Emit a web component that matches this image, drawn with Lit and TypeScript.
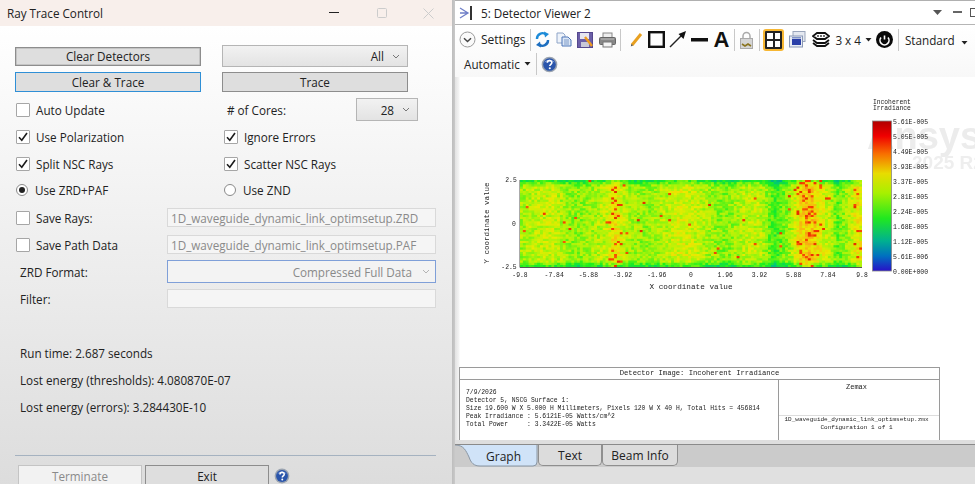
import { LitElement, html, css, svg } from "lit";
import { customElement } from "lit/decorators.js";

const caret = html`<svg class="cv" width="8" height="5" viewBox="0 0 8 5"><path d="M1 1l3 3 3-3" fill="none" stroke="#777" stroke-width="1"/></svg>`;
const tri = html`<svg class="tri" width="7" height="4" viewBox="0 0 7 4"><path d="M.5 0h6L3.500 3.600z" fill="#222"/></svg>`;
const help = (size: number) => html`<svg width=${size} height=${size} viewBox="0 0 18 18"><circle cx="9" cy="9" r="8.300" fill="#9aa3b0"/><circle cx="9" cy="9" r="6.700" fill="#2a55ab"/><path d="M3.500 7a6 5 0 0 1 11 0a8 5 0 0 0-11 0z" fill="#7f9bd8"/><path d="M6.700 7.200c0-3 4.800-3 4.800-.2 0 1.800-2.200 1.900-2.200 3.700" fill="none" stroke="#fff" stroke-width="1.700"/><circle cx="9.300" cy="13" r="1.100" fill="#fff"/></svg>`;

function rng(seed: number) {
  let s = seed;
  return () => {
    s = (s * 1664525 + 1013904223) >>> 0;
    return s / 4294967296;
  };
}
function colormap(v: number): [number, number, number] {
  const stops: [number, number, number, number][] = [
    [0, 40, 20, 200], [0.12, 0, 120, 190], [0.25, 0, 200, 120], [0.38, 30, 240, 30],
    [0.52, 170, 245, 10], [0.62, 235, 235, 0], [0.74, 250, 170, 20], [0.86, 248, 60, 0], [1, 190, 0, 0],
  ];
  for (let i = 1; i < stops.length; i++) {
    if (v <= stops[i][0]) {
      const a = stops[i - 1], b = stops[i];
      const t = (v - a[0]) / (b[0] - a[0]);
      return [a[1] + (b[1] - a[1]) * t, a[2] + (b[2] - a[2]) * t, a[3] + (b[3] - a[3]) * t];
    }
  }
  return [190, 0, 0];
}
function gauss(x: number, c: number, w: number) {
  return Math.exp(-((x - c) * (x - c)) / (2 * w * w));
}

const xTicks = ["-9.8", "-7.84", "-5.88", "-3.92", "-1.96", "0", "1.96", "3.92", "5.88", "7.84", "9.8"];
const barLabels = ["5.61E-005", "5.05E-005", "4.49E-005", "3.93E-005", "3.37E-005", "2.81E-005", "2.24E-005", "1.68E-005", "1.12E-005", "5.61E-006", "0.00E+000"];

@customElement("app-root")
export class AppRoot extends LitElement {
  static styles = css`
    :host { display: flex; width: 975px; height: 484px; overflow: hidden; font-family: "Open Sans", "Noto Sans", sans-serif; font-size: 11.700px; color: #222; background: #fff; }
    * { box-sizing: border-box; }
    .left { width: 452px; height: 484px; flex: none; display: flex; flex-direction: column; overflow: hidden; }
    .wintitle { height: 26px; flex: none; background: #f8efeb; display: flex; align-items: center; padding-left: 7px; }
    .wintitle .t { flex: 1; }
    .wbtn { width: 48px; display: flex; justify-content: center; }
    .wbtn.last { width: 46px; padding-right: 2px; }
    .body { flex: 1; background: linear-gradient(#fff, #dcdcdc); padding: 19px 16px 0 15px; display: flex; flex-direction: column; }
    .two { display: grid; grid-template-columns: 186px 186px; column-gap: 21px; }
    .btn { border: 1px solid #8d8d8d; background: #dedede; display: flex; align-items: center; justify-content: center; color: #222; }
    .r1 { height: 22px; align-items: center; }
    .r1 .btn { height: 19px; box-shadow: inset 0 0 0 .5px #aaa; }
    .r2 { margin-top: 5px; height: 20px; }
    .focus { border-color: #2f8fd6; }
    .sel { border: 1px solid #b5b5b5; background: linear-gradient(#f2f2f2, #e3e3e3); display: flex; align-items: center; justify-content: flex-end; gap: 8px; padding-right: 7px; }
    .sel.all { height: 22px; }
    .rows { margin-top: 4px; }
    .row { height: 27px; display: grid; grid-template-columns: 208px 1fr; align-items: center; }
    .row.up { padding-bottom: 1px; }
    .cell { display: flex; align-items: center; }
    .box { width: 14px; height: 14px; margin-left: 1px; margin-right: 6px; border: 1px solid #a6a6a6; background: #fff; border-radius: 1px; flex: none; display: flex; align-items: center; justify-content: center; }
    .radio { width: 12px; height: 12px; margin-left: 1px; margin-right: 7px; border: 1px solid #8a8a8a; background: #fff; border-radius: 50%; flex: none; display: flex; align-items: center; justify-content: center; }
    .radio i { width: 6px; height: 6px; border-radius: 50%; background: #222; display: block; }
    .cores { display: flex; align-items: center; justify-content: space-between; padding-left: 4px; padding-right: 18px; }
    .cores .sel { width: 62px; height: 23px; }
    .frow { height: 27px; display: grid; grid-template-columns: 152px 269px; align-items: center; }
    .input { height: 19px; border: 1px solid #d9d9d9; background: #f5f5f5; color: #8a8a8a; padding-left: 3px; display: flex; align-items: center; white-space: nowrap; overflow: hidden; }
    .lab { padding-left: 5px; }
    .combo { height: 23px; border: 1px solid #7f9fd8; background: #f3f3f3; color: #8a8a8a; display: flex; align-items: center; justify-content: flex-end; gap: 10px; padding-right: 5px; }
    .combo .cv { opacity: .5; }
    .status { margin-top: 27px; padding-left: 5px; }
    .status div { height: 27px; display: flex; align-items: center; }
    .sep { margin-top: 35px; height: 1px; flex: none; background: #a5b2c0; }
    .foot { margin-top: 9px; padding-left: 3px; display: flex; align-items: flex-start; gap: 3px; }
    .fbtn { width: 124px; height: 26px; border: 1px solid #8d8d8d; background: #dedede; display: flex; align-items: center; justify-content: center; padding-bottom: 4px; }
    .fbtn.off { background: #f2f2f2; border-color: #c4c4c4; color: #8a8a8a; }
    .foot svg { margin-left: 2px; margin-top: 3px; }

    .gutter { width: 3px; flex: none; background: linear-gradient(90deg, #bdbdbd, #c9c9c9); }
    .right { flex: 1; display: flex; flex-direction: column; min-width: 0; }
    .vtitle { height: 25px; flex: none; border-top: 1px solid #b0b0b0; border-bottom: 1px solid #b5b5b5; background: #fff; display: flex; align-items: center; padding-left: 4px; }
    .vtitle .t { flex: 1; margin-left: 8px; }
    .vctl { display: flex; align-items: center; gap: 8px; margin-right: -3px; }
    .gap3 { margin-left: 3px; }
    .tools { height: 52px; flex: none; background: linear-gradient(#fff, #f8f8f8); padding: 2px 0 0 4px; display: flex; flex-direction: column; }
    .tr { height: 26px; display: flex; align-items: center; white-space: nowrap; }
    .tr2 { padding-left: 5px; margin-top: -1px; }
    .tsep { width: 1px; height: 22px; background: #c8c8c8; flex: none; margin: 0 4px; }
    .tr svg { flex: none; }
    .tri { margin-left: 4px; }
    .settings { font-size: 12px; margin-left: 5px; }
    .m4 { margin-right: 4px; } .m5 { margin-right: 5px; } .m6 { margin-right: 6px; }
    .ml5 { margin-left: 5px; } .ml1 { margin-left: 1px; }
    .aglyph { font-family: "Liberation Sans", sans-serif; font-weight: 700; font-size: 22px; line-height: 20px; margin: 0 1px 0 6px; color: #111; }
    .seplock { margin: 0 3px 0 0; }
    .hl { width: 21px; height: 22px; border: 2px solid #f7b733; border-radius: 3px; background: #222; padding: 2px; display: grid; grid-template-columns: 1fr 1fr; gap: 2px; flex: none; margin-right: 5px; }
    .hl i { background: #fff; display: block; }
    .pw { margin-left: 4px; }
    .sep6 { margin: 0 6px 0 5px; }
    .sep2 { margin: 0 4px 0 5px; }
    .stdc { margin-left: 2px; }
    .plot { height: 290px; flex: none; position: relative; background: linear-gradient(90deg, #e2e2e2, #f4f4f4 4px, #fff 5px); overflow: hidden; }
    .water { position: absolute; left: 412px; top: 41px; color: #ececec; font-family: "Liberation Sans", sans-serif; font-weight: 700; font-size: 38px; line-height: 36px; white-space: nowrap; filter: blur(.5px); }
    .water2 { position: absolute; left: 457px; top: 76px; color: #eeeeee; font-family: "Liberation Sans", sans-serif; font-weight: 700; font-size: 19px; line-height: 20px; white-space: nowrap; filter: blur(.5px); }
    .gsvg { position: absolute; left: -2px; top: 0; filter: blur(.3px); }
    .gsvg text { font-family: "Liberation Mono", monospace; fill: #222; }
    canvas { position: absolute; left: 65px; top: 103px; width: 342px; height: 87px; filter: blur(.4px); }
    .table { height: 73px; flex: none; background: linear-gradient(90deg, #e2e2e2, #f4f4f4 4px, #fff 5px); padding-left: 4px; overflow: hidden; }
    .tinner { width: 481px; height: 73px; border: 1px solid #9a9a9a; border-bottom: 0; background: #fff; display: grid; grid-template-columns: 318px 1fr; grid-template-rows: 12px 1fr; font-family: "Liberation Mono", monospace; color: #222; filter: blur(.25px); }
    .thead { grid-column: 1 / 3; text-align: center; font-size: 7.200px; line-height: 11px; border-bottom: 1px solid #9a9a9a; }
    .tbody { font-size: 6.370px; line-height: 7.900px; padding: 9px 0 0 6px; white-space: pre; }
    .tside { border-left: 1px solid #9a9a9a; display: grid; grid-template-rows: 36px 1fr; text-align: center; }
    .zem { font-size: 7px; line-height: 12px; padding: 1px 5px 0 0; border-bottom: 1px solid #ddd; }
    .fn { font-size: 6px; line-height: 8px; padding-right: 5px; white-space: nowrap; }
    .strip0 { height: 4px; flex: none; background: #dedede; }
    .tabs { height: 23px; flex: none; background: #cbcbcb; border-top: 1px solid #8a8a8a; display: flex; align-items: stretch; font-size: 12px; }
    .tab { display: flex; align-items: center; justify-content: center; border: 1px solid #8f8f8f; border-top: 0; background: #dcdcdc; border-radius: 0 0 5px 5px; margin-bottom: 1px; color: #222; }
    .tab.t2 { width: 64px; } .tab.t3 { width: 76px; }
    .tab.on { position: relative; width: 83px; padding-left: 14px; border: 0; background: none; margin: 0; }
    .tab.on svg { position: absolute; left: 0; top: 0; }
    .tab.on span { position: relative; }
    .tail { flex: 1; background: #e0e0e0; }
  `;

  firstUpdated() {
    const c = this.renderRoot.querySelector("canvas") as HTMLCanvasElement;
    const ctx = c.getContext("2d")!;
    const r = rng(7);
    for (let y = 0; y < 40; y++) {
      for (let x = 0; x < 120; x++) {
        const fx = x / 119;
        const edge = y === 0 || y === 39 ? -0.16 : y === 1 || y === 38 ? -0.09 : y === 2 || y === 37 ? -0.03 : 0;
        let base = 0.52 + 0.03 * Math.sin(fx * 30);
        base += 0.17 * gauss(x, 100, 3.2) + 0.14 * gauss(x, 118, 1.8) + 0.08 * gauss(x, 33, 1.6);
        base += 0.03 * gauss(x, 12, 3) + 0.03 * gauss(x, 60, 12);
        base -= 0.1 * gauss(x, 89, 2) + 0.09 * gauss(x, 111, 1.2) + 0.04 * gauss(x, 72, 3);
        const n = r();
        let v = base + edge + (n - 0.5) * 0.15;
        if (r() > 0.994 - 0.17 * gauss(x, 100, 3) - 0.1 * gauss(x, 118, 1.5) - 0.12 * gauss(x, 33, 1.5)) v = 0.83 + r() * 0.07;
        const [a, b, d] = colormap(Math.max(0.2, v));
        ctx.fillStyle = `rgb(${a | 0},${b | 0},${d | 0})`;
        ctx.fillRect(x * 3, y * 3, 3, 3);
      }
    }
  }

  private check(label: string, on: boolean) {
    return html`<div class="cell"><span class="box">${on ? html`<svg width="10" height="10" viewBox="0 0 10 10"><path d="M1 5.200l2.800 3L9 1" fill="none" stroke="#1c1c1c" stroke-width="1.600"/></svg>` : ""}</span>${label}</div>`;
  }
  private radio(label: string, on: boolean) {
    return html`<div class="cell"><span class="radio">${on ? html`<i></i>` : ""}</span>${label}</div>`;
  }

  private graph() {
    const xs = xTicks.map((t, i) => svg`<text x=${67 + i * 34.2} y="200" font-size="6.400" text-anchor="middle">${t}</text>`);
    const stops = [[0, "#b00000"], [0.1, "#f00000"], [0.22, "#f87000"], [0.35, "#e8dc00"], [0.48, "#a8f000"], [0.65, "#20e820"], [0.8, "#00b090"], [0.9, "#0070c0"], [1, "#2810c8"]];
    return html`<svg class="gsvg" width="522" height="290" viewBox="0 0 522 290">
      <defs><linearGradient id="bar" x1="0" y1="0" x2="0" y2="1">
        ${stops.map((s) => svg`<stop offset=${s[0]} stop-color=${s[1]}></stop>`)}
      </linearGradient></defs>
      <path d="M67 103v87.500h342" fill="none" stroke="#555" stroke-width="1"/>
      ${xs}
      <text x="58" y="105" font-size="6.400" text-anchor="middle">2.5</text>
      <text x="61" y="149" font-size="6.400" text-anchor="middle">0</text>
      <text x="56" y="192" font-size="6.400" text-anchor="middle">-2.5</text>
      <text transform="translate(36 146) rotate(-90)" font-size="7.500" text-anchor="middle">Y coordinate value</text>
      <text x="238" y="212" font-size="7.700" text-anchor="middle">X coordinate value</text>
      <text x="420" y="27" font-size="6.300">Incoherent</text>
      <text x="420" y="33" font-size="6.300">Irradiance</text>
      <rect x="419.500" y="44" width="19" height="150" fill="url(#bar)" stroke="#888" stroke-width=".8"/>
      ${barLabels.map((t, i) => svg`<text x="440" y=${46.500 + i * 15} font-size="6.500">${t}</text>`)}
    </svg>`;
  }

  render() {
    return html`
      <section class="left">
        <div class="wintitle"><span class="t">Ray Trace Control</span>
          <span class="wbtn"><svg width="10" height="2"><rect width="10" height="1" fill="#222"/></svg></span>
          <span class="wbtn"><svg width="10" height="10"><rect x=".5" y=".5" width="9" height="9" rx="1" fill="none" stroke="#ccc"/></svg></span>
          <span class="wbtn last"><svg width="11" height="11"><path d="M.5.500l10 10m0-10l-10 10" stroke="#ccc"/></svg></span>
        </div>
        <div class="body">
          <div class="two r1"><div class="btn">Clear Detectors</div><div class="sel all">All ${caret}</div></div>
          <div class="two r2"><div class="btn focus">Clear &amp; Trace</div><div class="btn">Trace</div></div>
          <div class="rows">
            <div class="row">${this.check("Auto Update", false)}<div class="cores"><span># of Cores:</span><div class="sel">28 ${caret}</div></div></div>
            <div class="row">${this.check("Use Polarization", true)}${this.check("Ignore Errors", true)}</div>
            <div class="row">${this.check("Split NSC Rays", true)}${this.check("Scatter NSC Rays", true)}</div>
            <div class="row up">${this.radio("Use ZRD+PAF", true)}${this.radio("Use ZND", false)}</div>
            <div class="frow">${this.check("Save Rays:", false)}<div class="input">1D_waveguide_dynamic_link_optimsetup.ZRD</div></div>
            <div class="frow">${this.check("Save Path Data", false)}<div class="input">1D_waveguide_dynamic_link_optimsetup.PAF</div></div>
            <div class="frow"><span class="lab">ZRD Format:</span><div class="combo">Compressed Full Data ${caret}</div></div>
            <div class="frow"><span class="lab">Filter:</span><div class="input"></div></div>
          </div>
          <div class="status"><div>Run time: 2.687 seconds</div><div>Lost energy (thresholds): 4.080870E-07</div><div>Lost energy (errors): 3.284430E-10</div></div>
          <div class="sep"></div>
          <div class="foot"><div class="fbtn off">Terminate</div><div class="fbtn">Exit</div>${help(16)}</div>
        </div>
      </section>
      <div class="gutter"></div>
      <section class="right">
        <div class="vtitle">
          <svg width="14" height="16" viewBox="0 0 14 16"><path d="M1 3l8 5-8 5M1 8h8" fill="none" stroke="#6f7fc8" stroke-width="1.300"/><rect x="11" y="1" width="2" height="14" fill="#333"/></svg>
          <span class="t">5: Detector Viewer 2</span>
          <span class="vctl">
            <svg width="9" height="5"><path d="M0 0h9L4.500 5z" fill="#555"/></svg>
            <svg class="gap3" width="9" height="3"><rect width="9" height="2" fill="#666"/></svg>
            <svg width="8" height="10"><rect x=".5" y=".5" width="8" height="8" fill="none" stroke="#555"/></svg>
          </span>
        </div>
        <div class="tools">
          <div class="tr">
            <svg width="17" height="17" viewBox="0 0 17 17"><circle cx="8.500" cy="8.500" r="7.500" fill="#fafafa" stroke="#9a9a9a"/><path d="M5 7.200l3.500 3.300L12 7.200" fill="none" stroke="#444" stroke-width="1.500"/></svg>
            <span class="settings">Settings</span><span class="tsep"></span>
            <svg class="m6" width="15" height="17" viewBox="0 0 15 17"><path d="M2 8a5.500 5.500 0 0 1 9-4.500" fill="none" stroke="#1d8bd8" stroke-width="2.400"/><path d="M9 .5l5 2.500-4 3.500z" fill="#1d8bd8"/><path d="M13 9a5.500 5.500 0 0 1-9 4.500" fill="none" stroke="#1d6fc0" stroke-width="2.400"/><path d="M6 16.500l-5-2.500 4-3.500z" fill="#1d6fc0"/></svg>
            <svg class="m5" width="16" height="15" viewBox="0 0 16 15"><path d="M1 1h6l2 2v8H1z" fill="#eef3fa" stroke="#8fa5c8"/><path d="M6 5h6l3 3v6H6z" fill="#dce7f6" stroke="#4f77b8"/><path d="M8 8h5M8 10h5M8 12h5" stroke="#7f9bc8"/></svg>
            <svg class="m5" width="17" height="16" viewBox="0 0 17 16"><rect x=".5" y=".5" width="15" height="15" fill="#6c5fa8" stroke="#55488e"/><rect x="3" y="1" width="9" height="6" fill="#e6e6f0"/><rect x="4" y="10" width="8" height="5" fill="#c8c8d8"/><path d="M8 5l7 9" stroke="#ee9a20" stroke-width="2.400"/></svg>
            <svg width="17" height="16" viewBox="0 0 17 16"><rect x="4" y="1" width="9" height="5" fill="#eee" stroke="#888"/><rect x=".5" y="5.500" width="16" height="7" rx="1" fill="#888" stroke="#666"/><rect x="4" y="10" width="9" height="5" fill="#f4f4f4" stroke="#777"/><path d="M2 7h13" stroke="#bbb"/></svg>
            <span class="tsep"></span>
            <svg class="m5 ml5" width="13" height="15" viewBox="0 0 13 15"><path d="M2 13L11 2" stroke="#e8a020" stroke-width="3"/><path d="M.8 14.500l.6-2.500 1.800 1.300z" fill="#555"/></svg>
            <svg class="m4" width="17" height="17" viewBox="0 0 17 17"><rect x="1.200" y="1.200" width="14.600" height="14.600" fill="none" stroke="#111" stroke-width="2.400"/></svg>
            <svg class="m5" width="17" height="17" viewBox="0 0 17 17"><path d="M1 16L13 4" stroke="#222" stroke-width="1.500"/><path d="M9.500 3L17 0l-2.500 8z" fill="#111"/></svg>
            <svg width="17" height="4" viewBox="0 0 17 4"><rect width="17" height="3.500" fill="#111"/></svg>
            <span class="aglyph">A</span>
            <span class="tsep"></span>
            <svg class="ml1 m6" width="13" height="18" viewBox="0 0 13 18"><path d="M3 8V5a3.500 3.500 0 0 1 7 0v3" fill="none" stroke="#aaa" stroke-width="1.500"/><rect x=".5" y="7.500" width="12" height="10" fill="#d5d5d5" stroke="#aaa"/><path d="M2 13l3 2 3-2 3 2" stroke="#8a7420" stroke-width="1.600" fill="none"/></svg>
            <span class="tsep seplock"></span>
            <span class="hl"><i></i><i></i><i></i><i></i></span>
            <svg class="m6" width="17" height="17" viewBox="0 0 17 17"><rect x="4" y=".5" width="12" height="10" fill="#e4e8f0" stroke="#9aa5bb"/><rect x=".5" y="5" width="13" height="11" fill="#e9edf4" stroke="#8a98b5"/><rect x="3" y="8" width="9" height="6" fill="#2a3fa8"/><rect x="3" y="6" width="9" height="1.500" fill="#7f92c8"/></svg>
            <svg class="m5" width="18" height="15" viewBox="0 0 18 15"><path d="M5 1h8l4 3-4 3H5L1 4z" fill="none" stroke="#111" stroke-width="1.800"/><path d="M1 8l4 3h8l4-3M1 11l4 3h8l4-3" fill="none" stroke="#111" stroke-width="1.800"/><path d="M6 3v2M9 3v2M12 3v2" stroke="#111" stroke-width="1.200"/></svg>
            <span>3 x 4</span>${tri}
            <svg class="pw" width="17" height="17" viewBox="0 0 17 17"><circle cx="8.500" cy="8.500" r="8.500" fill="#0a0a0a"/><path d="M5 6.500a4.500 4.500 0 1 0 7 0" fill="none" stroke="#fff" stroke-width="1.600"/><path d="M8.500 4.500v4" stroke="#fff" stroke-width="1.600"/></svg>
            <span class="tsep sep6"></span>
            <span>Standard</span><span class="stdc">${tri}</span>
          </div>
          <div class="tr tr2">
            <span>Automatic</span>${tri}<span class="tsep sep2"></span>${help(17)}
          </div>
        </div>
        <div class="plot">
          <div class="water">Ansys</div><div class="water2">2025 R2</div>
          ${this.graph()}
          <canvas width="360" height="120"></canvas>
        </div>
        <div class="table"><div class="tinner">
          <div class="thead">Detector Image: Incoherent Irradiance</div>
          <div class="tbody">7/9/2026
Detector 5, NSCG Surface 1:
Size 19.600 W X 5.000 H Millimeters, Pixels 120 W X 40 H, Total Hits = 456814
Peak Irradiance : 5.6121E-05 Watts/cm^2
Total Power     : 3.3422E-05 Watts</div>
          <div class="tside"><div class="zem">Zemax</div><div class="fn">1D_waveguide_dynamic_link_optimsetup.zmx<br>Configuration 1 of 1</div></div>
        </div></div>
        <div class="strip0"></div>
        <div class="tabs">
          <div class="tab on"><svg width="83" height="22" viewBox="0 0 83 22"><path d="M0 0C9 0 11 6 14 12C16 18 19 21 25 21H78Q82 21 82 17V0Z" fill="#d0e3f8"/><path d="M0 0C9 0 11 6 14 12C16 18 19 21 25 21H78Q82 21 82 17V0" fill="none" stroke="#8a97a5"/></svg><span>Graph</span></div>
          <div class="tab t2">Text</div><div class="tab t3">Beam Info</div>
        </div>
        <div class="tail"></div>
      </section>
    `;
  }
}
